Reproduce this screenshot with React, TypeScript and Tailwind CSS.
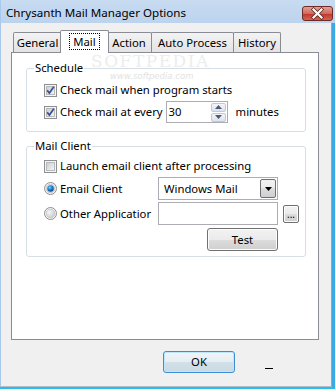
import React from "react";

function CheckBox({ checked }: { checked: boolean }) {
  return (
    <svg width="13" height="13" viewBox="0 0 13 13" className="shrink-0">
      <defs>
        <linearGradient id="cbin" x1="0" y1="0" x2="1" y2="1">
          <stop offset="0" stopColor="#c9ccd1" />
          <stop offset="1" stopColor="#f7f7f7" />
        </linearGradient>
      </defs>
      <rect x="0.5" y="0.5" width="12" height="12" fill="#f5f5f5" stroke="#8e8f8f" />
      <rect x="2.5" y="2.5" width="8" height="8" fill="url(#cbin)" stroke="#b6b9bd" />
      {checked && (
        <path d="M3.2 6.4 L5.4 9 L9.8 2.8" stroke="#3d4f8f" strokeWidth="1.7" fill="none" />
      )}
    </svg>
  );
}

function Radio({ selected }: { selected: boolean }) {
  return (
    <svg width="13" height="13" viewBox="0 0 13 13" className="shrink-0">
      <defs>
        <radialGradient id="rin" cx="0.35" cy="0.35" r="0.8">
          <stop offset="0" stopColor="#f6f6f6" />
          <stop offset="1" stopColor="#c3c6cb" />
        </radialGradient>
        <radialGradient id="rsel" cx="0.4" cy="0.35" r="0.7">
          <stop offset="0" stopColor="#7fd0ff" />
          <stop offset="0.5" stopColor="#1f7ec9" />
          <stop offset="1" stopColor="#0c3f7c" />
        </radialGradient>
      </defs>
      <circle cx="6.5" cy="6.5" r="6" fill="#f4f4f4" stroke="#8e8f8f" />
      <circle cx="6.5" cy="6.5" r="4.3" fill="url(#rin)" stroke="#b6b9bd" strokeWidth="0.6" />
      {selected && <circle cx="6.5" cy="6.5" r="3.2" fill="url(#rsel)" />}
    </svg>
  );
}

function CloseButton() {
  return (
    <svg width="31" height="15" viewBox="0 0 31 15">
      <defs>
        <linearGradient id="cls" x1="0" y1="0" x2="0" y2="1">
          <stop offset="0" stopColor="#e3a39c" />
          <stop offset="0.5" stopColor="#cf6a5f" />
          <stop offset="0.55" stopColor="#c0392e" />
          <stop offset="1" stopColor="#d2695a" />
        </linearGradient>
      </defs>
      <rect x="0.5" y="0.5" width="30" height="14" rx="2.5" fill="url(#cls)" stroke="#6f2a24" />
      <path
        d="M11.5 3.5 L19.5 11.5 M19.5 3.5 L11.5 11.5"
        stroke="#5a1f1a"
        strokeWidth="3.6"
        strokeLinecap="square"
      />
      <path
        d="M11.5 3.5 L19.5 11.5 M19.5 3.5 L11.5 11.5"
        stroke="#ffffff"
        strokeWidth="2.2"
        strokeLinecap="square"
      />
    </svg>
  );
}

function Tab({ label, w, selected }: { label: string; w: number; selected?: boolean }) {
  if (selected) {
    return (
      <div
        className="relative z-10 -mb-px -ml-[2px] -mr-[2px] flex h-[23px] items-start justify-center rounded-t-[2px] border border-b-0 border-[#898c95] bg-white pt-[2px]"
        style={{ width: w }}
      >
        <span className="border border-dotted border-black px-[3px] leading-[15px]">{label}</span>
      </div>
    );
  }
  return (
    <div
      className="-ml-px flex h-[20px] items-center justify-center rounded-t-[2px] border border-b-0 border-[#898c95] bg-gradient-to-b from-[#f3f3f3] to-[#e3e3e3] first:ml-0"
      style={{ width: w }}
    >
      <span className="leading-[16px]">{label}</span>
    </div>
  );
}

function GroupBox({
  label,
  className,
  children,
}: {
  label: string;
  className?: string;
  children: React.ReactNode;
}) {
  return (
    <div
      className={
        "relative z-10 ml-[14px] flex w-[280px] flex-col rounded-[3px] border border-[#d5dfe5] pl-[17px] " +
        (className ?? "")
      }
    >
      <span className="-ml-[10px] -mt-[9px] block h-[16px] w-fit bg-white px-[1px] leading-[16px]">
        {label}
      </span>
      {children}
    </div>
  );
}

function SpinBox() {
  return (
    <div className="ml-[3px] flex h-[22px] w-[62px] items-center justify-between border border-[#abadb3] bg-white pl-[2px] pr-px">
      <span className="leading-[16px]">30</span>
      <div className="flex flex-col gap-px">
        <div className="flex h-[9px] w-[15px] items-center justify-center rounded-[2px] border border-[#c3c9d1] bg-gradient-to-b from-[#f4f6f8] to-[#dde3ea]">
          <svg width="7" height="4" viewBox="0 0 7 4">
            <path d="M0 4 L3.5 0 L7 4 Z" fill="#4b5a7d" />
          </svg>
        </div>
        <div className="flex h-[9px] w-[15px] items-center justify-center rounded-[2px] border border-[#c3c9d1] bg-gradient-to-b from-[#f4f6f8] to-[#dde3ea]">
          <svg width="7" height="4" viewBox="0 0 7 4">
            <path d="M0 0 L3.5 4 L7 0 Z" fill="#4b5a7d" />
          </svg>
        </div>
      </div>
    </div>
  );
}

function PushButton({ label, className }: { label: string; className?: string }) {
  return (
    <div
      className={
        "flex items-center justify-center rounded-[3px] border border-[#707070] bg-[linear-gradient(#f2f2f2_0%,#ebebeb_50%,#dddddd_50%,#cfcfcf_100%)] shadow-[inset_0_0_0_1px_#fcfcfc] " +
        (className ?? "")
      }
    >
      <span className="leading-[16px]">{label}</span>
    </div>
  );
}

export default function App() {
  return (
    <div className="flex h-[389px] w-[335px] flex-col overflow-hidden bg-[#f0f0f0] font-['Noto_Sans','Open_Sans',sans-serif] text-[11.3px] text-black">
      {/* title bar */}
      <div className="flex h-[23px] shrink-0 items-start justify-between border-l border-l-[#a8c8ec] bg-gradient-to-b from-[#c8dbf1] to-[#bcd3ee] pl-[5px] pr-[2px]">
        <span className="mt-[4px] text-[11.6px] leading-[17px] text-black">
          Chrysanth Mail Manager Options
        </span>
        <div className="mt-[6px]">
          <CloseButton />
        </div>
      </div>

      <div className="flex flex-1 flex-col border-b-2 border-r-[3px] border-b-[#27bdee] border-r-[#3aa9e4]">
        <div className="flex flex-1 flex-col border-b border-l border-r border-b-[#b4bcc4] border-l-[#a8c8ec] border-r-[#9aa6b2]">
          {/* tabs */}
          <div className="ml-[10px] mt-[7px] flex h-[22px] items-end pl-[2px]">
            <Tab label="General" w={49} />
            <Tab label="Mail" w={49} selected />
            <Tab label="Action" w={46} />
            <Tab label="Auto Process" w={83} />
            <Tab label="History" w={48} />
          </div>

          {/* tab panel */}
          <div className="relative ml-[10px] flex h-[288px] w-[308px] flex-col overflow-hidden border border-[#898c95] bg-white">
            {/* watermark overlay */}
            <span className="pointer-events-none absolute left-[79px] top-px font-['DejaVu_Serif',serif] text-[17px] leading-[14px] tracking-[1.5px] text-[#ededed]">
              SOFTPEDIA
            </span>
            <span className="pointer-events-none absolute left-[98px] top-[19px] font-['DejaVu_Sans',sans-serif] text-[8.5px] italic leading-[8px] text-[#e2e2e2]">
              www.softpedia.com
            </span>

            <GroupBox label="Schedule" className="mt-[15px] h-[64px]">
              <div className="mt-[6px] flex h-[16px] items-center">
                <CheckBox checked />
                <span className="ml-[3px] leading-[16px]">Check mail when program starts</span>
              </div>
              <div className="mt-[3px] flex h-[22px] items-center">
                <CheckBox checked />
                <span className="ml-[3px] leading-[16px]">Check mail at every</span>
                <SpinBox />
                <span className="ml-[8px] leading-[16px]">minutes</span>
              </div>
            </GroupBox>

            <GroupBox label="Mail Client" className="mt-[14px] h-[111px]">
              <div className="mt-[4px] flex h-[16px] items-center">
                <CheckBox checked={false} />
                <span className="ml-[3px] leading-[16px]">Launch email client after processing</span>
              </div>
              <div className="mt-[3px] flex h-[23px] items-center">
                <div className="flex w-[114px] items-center">
                  <Radio selected />
                  <span className="ml-[3px] leading-[16px]">Email Client</span>
                </div>
                <div className="flex h-[23px] w-[120px] items-center justify-between border border-[#abadb3] bg-white pl-[5px] pr-px">
                  <span className="leading-[16px]">Windows Mail</span>
                  <div className="flex h-[19px] w-[16px] items-center justify-center rounded-[2px] border border-[#707070] bg-[linear-gradient(#f2f2f2_0%,#ebebeb_50%,#dddddd_50%,#cfcfcf_100%)]">
                    <svg width="7" height="4" viewBox="0 0 7 4">
                      <path d="M0 0 L3.5 4 L7 0 Z" fill="#000" />
                    </svg>
                  </div>
                </div>
              </div>
              <div className="mt-[2px] flex h-[23px] items-center">
                <div className="flex w-[114px] items-center overflow-hidden">
                  <Radio selected={false} />
                  <span className="ml-[3px] whitespace-nowrap leading-[16px]">Other Applicatior</span>
                </div>
                <div className="h-[23px] w-[120px] border border-[#abadb3] bg-white" />
                <PushButton
                  label="..."
                  className="ml-[5px] h-[18px] w-[16px] items-end !rounded-[2px] text-[10px]"
                />
              </div>
              <div className="mt-[3px] flex h-[23px] items-center pl-[163px]">
                <PushButton label="Test" className="h-[23px] w-[71px]" />
              </div>
            </GroupBox>
          </div>

          {/* bottom buttons */}
          <div className="mt-[11px] flex items-end">
            <div className="ml-[162px] flex h-[22px] w-[72px] items-center justify-center rounded-[3px] border border-[#3c8fd6] bg-[linear-gradient(#f0f5f8_0%,#e6eef3_50%,#d3e0e8_50%,#c8d9e3_100%)] shadow-[inset_0_0_0_1px_#bfe6fb]">
              <span className="leading-[16px]">OK</span>
            </div>
            <div className="mb-[4px] ml-[30px] h-px w-[8px] bg-black" />
          </div>
        </div>
      </div>
    </div>
  );
}
